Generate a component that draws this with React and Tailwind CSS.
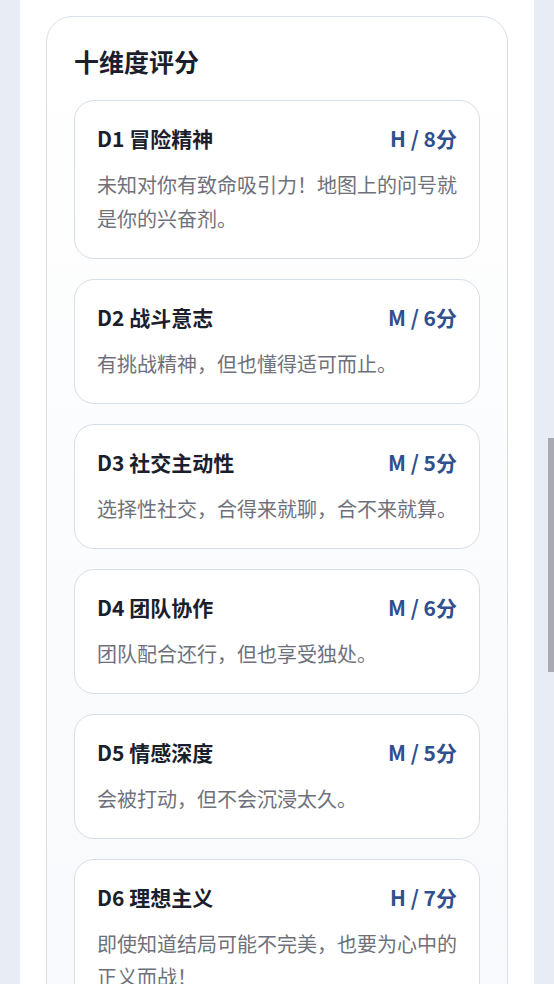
import React from 'react';

const dims = [
    { id: 'D1', name: '冒险精神', level: 'H', score: 8, desc: '未知对你有致命吸引力！地图上的问号就是你的兴奋剂。' },
    { id: 'D2', name: '战斗意志', level: 'M', score: 6, desc: '有挑战精神，但也懂得适可而止。' },
    { id: 'D3', name: '社交主动性', level: 'M', score: 5, desc: '选择性社交，合得来就聊，合不来就算。' },
    { id: 'D4', name: '团队协作', level: 'M', score: 6, desc: '团队配合还行，但也享受独处。' },
    { id: 'D5', name: '情感深度', level: 'M', score: 5, desc: '会被打动，但不会沉浸太久。' },
    { id: 'D6', name: '理想主义', level: 'H', score: 7, desc: '即使知道结局可能不完美，也要为心中的正义而战！' },
];

const DimCard = ({ d }) => (
    <div className="bg-white border border-[#d6deea] rounded-[20px] px-[22px] pt-[21px] pb-[22.5px]">
        <div className="flex justify-between items-center h-[32px]">
            <p className="text-[21px] font-semibold text-[#1b1e2c] leading-[32px]">{d.id} {d.name}</p>
            <p className="text-[21px] font-semibold text-[#2f4f8e] leading-[32px]">{d.level} / {d.score}分</p>
        </div>
        <p className="mt-[14px] text-[20px] leading-[33.5px] text-[#6e717b]">{d.desc}</p>
    </div>
);

export default function App() {
    return (
        <div className="relative h-[984px] overflow-hidden bg-[#e8ecf5]" style={{ fontFamily: '"Noto Sans CJK SC", "Noto Sans", sans-serif' }}>
            <div className="mx-[20px] w-[514px] h-full bg-white px-[26px] pt-[16px]">
                <div className="border border-[#d9e0ec] rounded-[26px] bg-gradient-to-b from-white to-[#f7f9fc] px-[27px] pt-[26px] pb-8">
                    <h2 className="text-[25px] font-semibold text-[#1b1e2c] leading-[36px] mb-[21px]">十维度评分</h2>
                    <div className="flex flex-col gap-5">
                        {dims.map((d) => (
                            <DimCard key={d.id} d={d} />
                        ))}
                    </div>
                </div>
            </div>
            {/* scrollbar thumb */}
            <div className="absolute right-0 top-[438px] w-[6px] h-[234px] bg-[#a9aab3]"></div>
        </div>
    );
}
